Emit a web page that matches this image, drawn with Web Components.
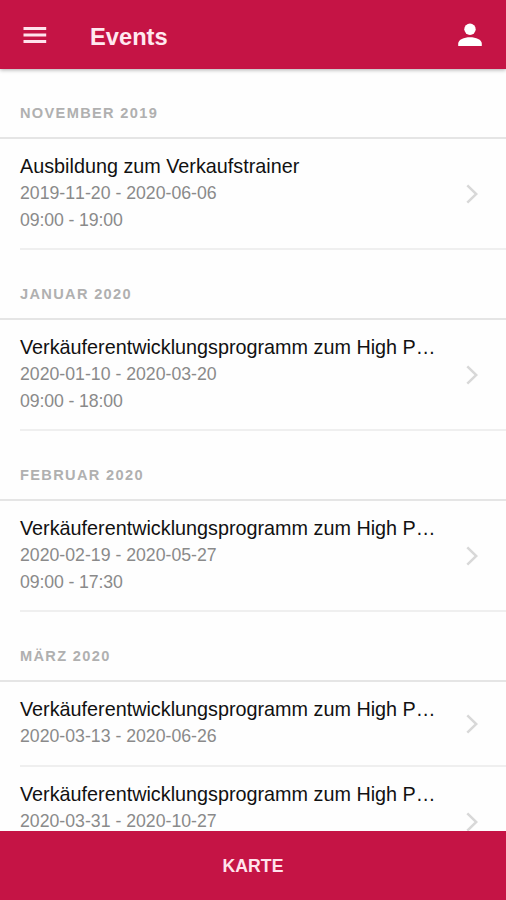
<!DOCTYPE html>
<html lang="de">
<head>
<meta charset="utf-8">
<title>Events</title>
<style>
  html, body { margin: 0; height: 100%; overflow: hidden; background: #fefefe; }
  body { font-family: "Liberation Sans", Arial, sans-serif; --brand: #c51445; }
</style>
</head>
<body>
<event-app>
  <app-bar slot="top">Events</app-bar>
  <month-section label="November 2019">
    <event-item dates="2019-11-20 - 2020-06-06" time="09:00 - 19:00">Ausbildung zum Verkaufstrainer</event-item>
  </month-section>
  <month-section label="Januar 2020">
    <event-item dates="2020-01-10 - 2020-03-20" time="09:00 - 18:00">Verkäuferentwicklungsprogramm zum High P…</event-item>
  </month-section>
  <month-section label="Februar 2020">
    <event-item dates="2020-02-19 - 2020-05-27" time="09:00 - 17:30">Verkäuferentwicklungsprogramm zum High P…</event-item>
  </month-section>
  <month-section label="März 2020">
    <event-item dates="2020-03-13 - 2020-06-26">Verkäuferentwicklungsprogramm zum High P…</event-item>
    <event-item dates="2020-03-31 - 2020-10-27" tall>Verkäuferentwicklungsprogramm zum High P…</event-item>
  </month-section>
  <map-button slot="bottom">KARTE</map-button>
</event-app>
<script>
class Base extends HTMLElement {
  connectedCallback() {
    if (!this.shadowRoot) this.attachShadow({ mode: "open" }).innerHTML = this.render();
  }
}

customElements.define("event-app", class extends Base {
  render() {
    return `<style>
      :host { display: flex; flex-direction: column; height: 900px; }
      main { flex: 1; min-height: 0; overflow: hidden; }
    </style>
    <slot name="top"></slot><main><slot></slot></main><slot name="bottom"></slot>`;
  }
});

customElements.define("app-bar", class extends Base {
  render() {
    return `<style>
      :host { display: flex; align-items: center; flex: none; height: 69px; box-sizing: border-box;
        padding: 3px 24px 0 23px; background: var(--brand); color: #ffe9f0; z-index: 1;
        box-shadow: 0 1px 4px rgba(0,0,0,.32); position: relative; }
      .menu { width: 24px; height: 18px; margin-bottom: 2px; }
      .user { width: 24px; height: 24px; margin-bottom: 3px; }
      h1 { flex: 1; margin: 2px 0 0 43px; font-size: 23.7px; line-height: 28px; font-weight: 700; }
    </style>
    <svg class="menu" viewBox="0 0 24 18"><path d="M.5 2.500h22.700M.5 9h22.700M.5 15.500h22.700" stroke="#ffe3ec" stroke-width="3"/></svg>
    <h1><slot></slot></h1>
    <svg class="user" viewBox="0 0 24 24"><circle cx="12" cy="6.2" r="5.700" fill="#fff"/><path d="M.2 23v-2.200C.2 16.500 6 14.300 12 14.300s11.800 2.200 11.800 6.500V23z" fill="#fff"/></svg>`;
  }
});

customElements.define("month-section", class extends Base {
  render() {
    return `<style>
      :host { display: block; }
      h2 { margin: 0; height: 70px; box-sizing: border-box; padding: 34px 20px 0; border-bottom: 2px solid #e5e5e5;
        font-size: 14.6px; line-height: 20px; font-weight: 700; letter-spacing: 1.33px; color: #b0b0b0; text-transform: uppercase; }
    </style>
    <h2>${this.getAttribute("label")}</h2><slot></slot>`;
  }
});

customElements.define("event-item", class extends Base {
  render() {
    const time = this.getAttribute("time");
    return `<style>
      :host { display: flex; align-items: center; height: ${time || this.hasAttribute("tall") ? 111 : 85}px; box-sizing: border-box;
        margin-left: 20px; border-bottom: 2px solid #efefef; padding-right: 28px; }
      .text { flex: 1; align-self: flex-start; padding-top: 14px; min-width: 0; white-space: nowrap; }
      h3 { margin: 0; font-size: 19.8px; line-height: 27px; font-weight: 400; color: #111; }
      p { margin: 0; font-size: 17.7px; line-height: 26.5px; color: #8a8a8a; font-kerning: none; }
      .time { letter-spacing: -.12px; }
      svg { width: 12px; height: 20px; flex: none; }
    </style>
    <div class="text"><h3><slot></slot></h3><p>${this.getAttribute("dates")}</p>${time ? `<p class="time">${time}</p>` : ""}</div>
    <svg viewBox="0 0 12 20"><path d="M1.300 1.300 10.300 10 1.300 18.700" fill="none" stroke="#d8d8d8" stroke-width="2.500"/></svg>`;
  }
});

customElements.define("map-button", class extends Base {
  render() {
    return `<style>
      :host { display: flex; align-items: center; justify-content: center; flex: none; height: 69px; box-sizing: border-box;
        padding-top: 1px; background: var(--brand); color: #ffe3ec; font-size: 17.6px; font-weight: 700; letter-spacing: .1px; }
    </style><slot></slot>`;
  }
});
</script>
</body>
</html>
